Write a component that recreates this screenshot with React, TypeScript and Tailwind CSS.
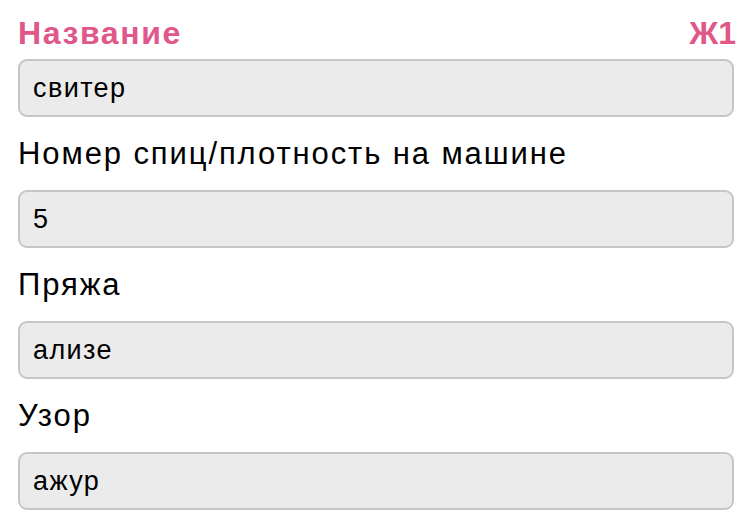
const fields = [
  { label: "Номер спиц/плотность на машине", value: "5" },
  { label: "Пряжа", value: "ализе" },
  { label: "Узор", value: "ажур" },
];

function Field({ value }: { value: string }) {
  return (
    <div className="flex h-[58px] items-center rounded-[9px] border-2 border-[#c6c6c6] bg-[#ebebeb] px-[13px] text-[27px] tracking-[1.4px] text-black">
      {value}
    </div>
  );
}

export default function App() {
  return (
    <div
      className="h-[530px] w-[750px] bg-white px-[18px] pt-[13px]"
      style={{ fontFamily: '"Liberation Sans", Arial, sans-serif' }}
    >
      <div className="w-[716px]">
        <div className="flex h-[40px] items-center justify-between text-[32px] font-bold leading-[40px] text-[#e0578a]">
          <span className="tracking-[1.6px]">Название</span>
          <span className="mr-[-2px]">Ж1</span>
        </div>
        <div className="mt-[6px]">
          <Field value="свитер" />
        </div>
        {fields.map((f) => (
          <div key={f.label}>
            <div className="mt-[19px] h-[36px] text-[31px] leading-[36px] tracking-[1.9px] text-black">
              {f.label}
            </div>
            <div className="mt-[18px]">
              <Field value={f.value} />
            </div>
          </div>
        ))}
      </div>
    </div>
  );
}
